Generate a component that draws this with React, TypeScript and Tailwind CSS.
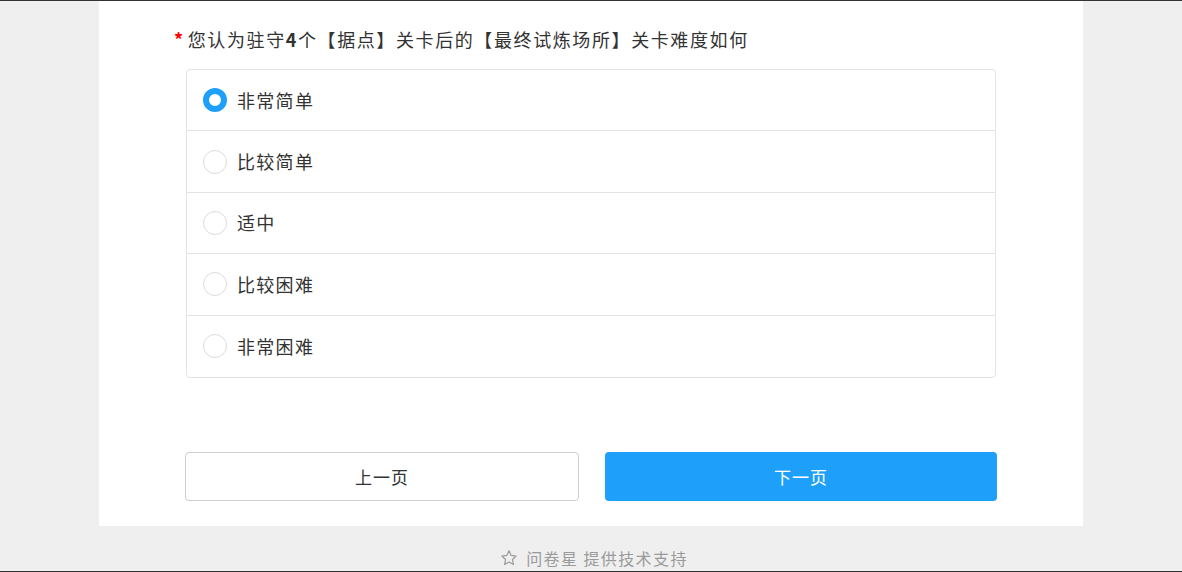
import React, { useState } from 'react';

const options = ['非常简单', '比较简单', '适中', '比较困难', '非常困难'];

const cjk = { fontFamily: '"Noto Sans CJK SC", "Noto Sans", sans-serif' };

const Radio: React.FC<{ checked: boolean }> = ({ checked }) =>
    checked ? (
        <span className="w-6 h-6 rounded-full border-[6px] border-[#1ea0fa] bg-white shrink-0" />
    ) : (
        <span className="w-6 h-6 rounded-full border border-[#dcdcdc] bg-white shrink-0" />
    );

const App: React.FC = () => {
    const [selected, setSelected] = useState(0);

    return (
        <div className="h-[572px] bg-[#efefef] border-t border-b border-[#333] flex flex-col" style={cjk}>
            <div className="w-[984px] mx-auto bg-white pt-[26px] pb-[25px]">
                <div className="pl-[75px] flex items-center text-[18px] leading-6 text-[#333] tracking-[1.6px]">
                    <span className="text-[#f00] mr-[3px] text-[18px] font-bold">*</span>
                    <span>
                        您认为驻守<b className="font-bold">4</b>个【据点】关卡后的【最终试炼场所】关卡难度如何
                    </span>
                </div>

                <div className="mx-[87px] mt-[18px] border border-[#e3e3e3] rounded-[4px]">
                    {options.map((opt, i) => (
                        <div
                            key={opt}
                            onClick={() => setSelected(i)}
                            className={`h-[61.4px] flex items-center pl-4 cursor-pointer ${i < options.length - 1 ? 'border-b border-[#e3e3e3]' : ''}`}
                        >
                            <Radio checked={selected === i} />
                            <span className="ml-[10px] text-[18px] text-[#333] tracking-[1.3px]">{opt}</span>
                        </div>
                    ))}
                </div>

                <div className="mx-[86px] mt-[74px] flex gap-[26px]">
                    <button className="flex-1 h-[49px] rounded-[4px] border border-[#cfcfcf] bg-white text-[17px] text-[#333] tracking-[1px]">
                        上一页
                    </button>
                    <button className="flex-1 h-[49px] rounded-[4px] bg-[#1ea0fa] text-[17px] text-white tracking-[1px]">
                        下一页
                    </button>
                </div>
            </div>

            <div className="flex-1 flex items-end justify-center pb-[1px] pl-[6px]">
                <div className="flex items-center text-[16px] text-[#9a9a9a] leading-6">
                    <svg width="18" height="18" viewBox="0 0 24 24" fill="none" stroke="#9a9a9a" strokeWidth="1.6" strokeLinejoin="round" className="mr-[8px]">
                        <path d="M12 2.5l2.9 6.1 6.6.8-4.9 4.6 1.3 6.6L12 17.3l-5.9 3.3 1.3-6.6-4.9-4.6 6.6-.8z" />
                    </svg>
                    <span className="tracking-[1.4px]">问卷星 提供技术支持</span>
                </div>
            </div>
        </div>
    );
};

export default App;
